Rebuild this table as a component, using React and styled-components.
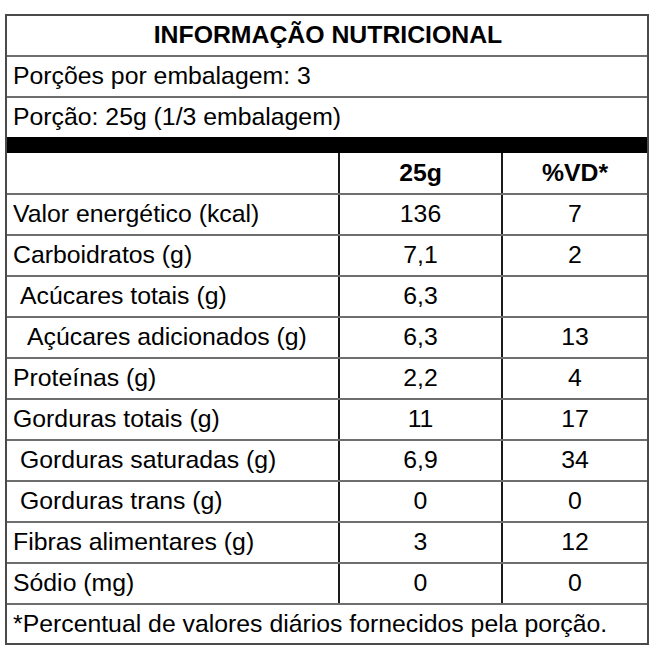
import React from 'react';
import styled, { createGlobalStyle } from 'styled-components';

const nutrients = [
    { label: 'Valor energético (kcal)', amount: '136', vd: '7', indent: 0 },
    { label: 'Carboidratos (g)', amount: '7,1', vd: '2', indent: 0 },
    { label: 'Acúcares totais (g)', amount: '6,3', vd: '', indent: 1 },
    { label: 'Açúcares adicionados (g)', amount: '6,3', vd: '13', indent: 2 },
    { label: 'Proteínas (g)', amount: '2,2', vd: '4', indent: 0 },
    { label: 'Gorduras totais (g)', amount: '11', vd: '17', indent: 0 },
    { label: 'Gorduras saturadas (g)', amount: '6,9', vd: '34', indent: 1 },
    { label: 'Gorduras trans (g)', amount: '0', vd: '0', indent: 1 },
    { label: 'Fibras alimentares (g)', amount: '3', vd: '12', indent: 0 },
    { label: 'Sódio (mg)', amount: '0', vd: '0', indent: 0 },
];

const indents = [6, 13, 20];

function App() {
    return (
        <>
            <GlobalStyle />
            <Label>
                <Title>INFORMAÇÃO NUTRICIONAL</Title>
                <InfoLine>Porções por embalagem: 3</InfoLine>
                <InfoLine last>Porção: 25g (1/3 embalagem)</InfoLine>
                <Bar />
                <TableRow header>
                    <Cell />
                    <Cell center divided bold>25g</Cell>
                    <Cell center divided bold>%VD*</Cell>
                </TableRow>
                {nutrients.map((item) => (
                    <TableRow key={item.label}>
                        <Cell indent={indents[item.indent]}>{item.label}</Cell>
                        <Cell center divided>{item.amount}</Cell>
                        <Cell center divided>{item.vd}</Cell>
                    </TableRow>
                ))}
                <Footnote>*Percentual de valores diários fornecidos pela porção.</Footnote>
            </Label>
        </>
    );
}

const GlobalStyle = createGlobalStyle`
    *{
        box-sizing: border-box;
    }
    body{
        margin: 0;
        background: #ffffff;
        color: #000000;
        font-family: "Liberation Sans", Arial, sans-serif;
    }
`;

const Label = styled.section`
    width: 644px;
    margin: 14px 0 0 5px;
    border: 2px solid #4a4a4a;
    background: #ffffff;
    display: flex;
    flex-direction: column;
    font-size: 24.8px;
    line-height: 1;
`;

const Title = styled.h1`
    margin: 0;
    height: 41px;
    display: flex;
    align-items: center;
    justify-content: center;
    font-size: 24.8px;
    font-weight: 700;
    border-bottom: 2px solid #6e6e6e;
    padding: 0 0 1px 2px;
`;

const InfoLine = styled.div`
    height: ${props => (props.last ? '39px' : '41px')};
    display: flex;
    align-items: center;
    padding-left: 6px;
    border-bottom: ${props => (props.last ? 'none' : '2px solid #6e6e6e')};
`;

const Bar = styled.div`
    height: 16px;
    background: #000000;
`;

const TableRow = styled.div`
    display: grid;
    grid-template-columns: 331px 163px 146px;
    height: ${props => (props.header ? '42px' : '41px')};
    border-bottom: 2px solid #6e6e6e;
`;

const Cell = styled.div`
    display: flex;
    align-items: center;
    justify-content: ${props => (props.center ? 'center' : 'flex-start')};
    padding-left: ${props => (props.center ? '0' : `${props.indent || 6}px`)};
    border-left: ${props => (props.divided ? '2px solid #1a1a1a' : 'none')};
    font-weight: ${props => (props.bold ? 700 : 400)};
    white-space: nowrap;
`;

const Footnote = styled.div`
    height: 38px;
    display: flex;
    align-items: center;
    padding-left: 6px;
    white-space: nowrap;
`;

export default App;
